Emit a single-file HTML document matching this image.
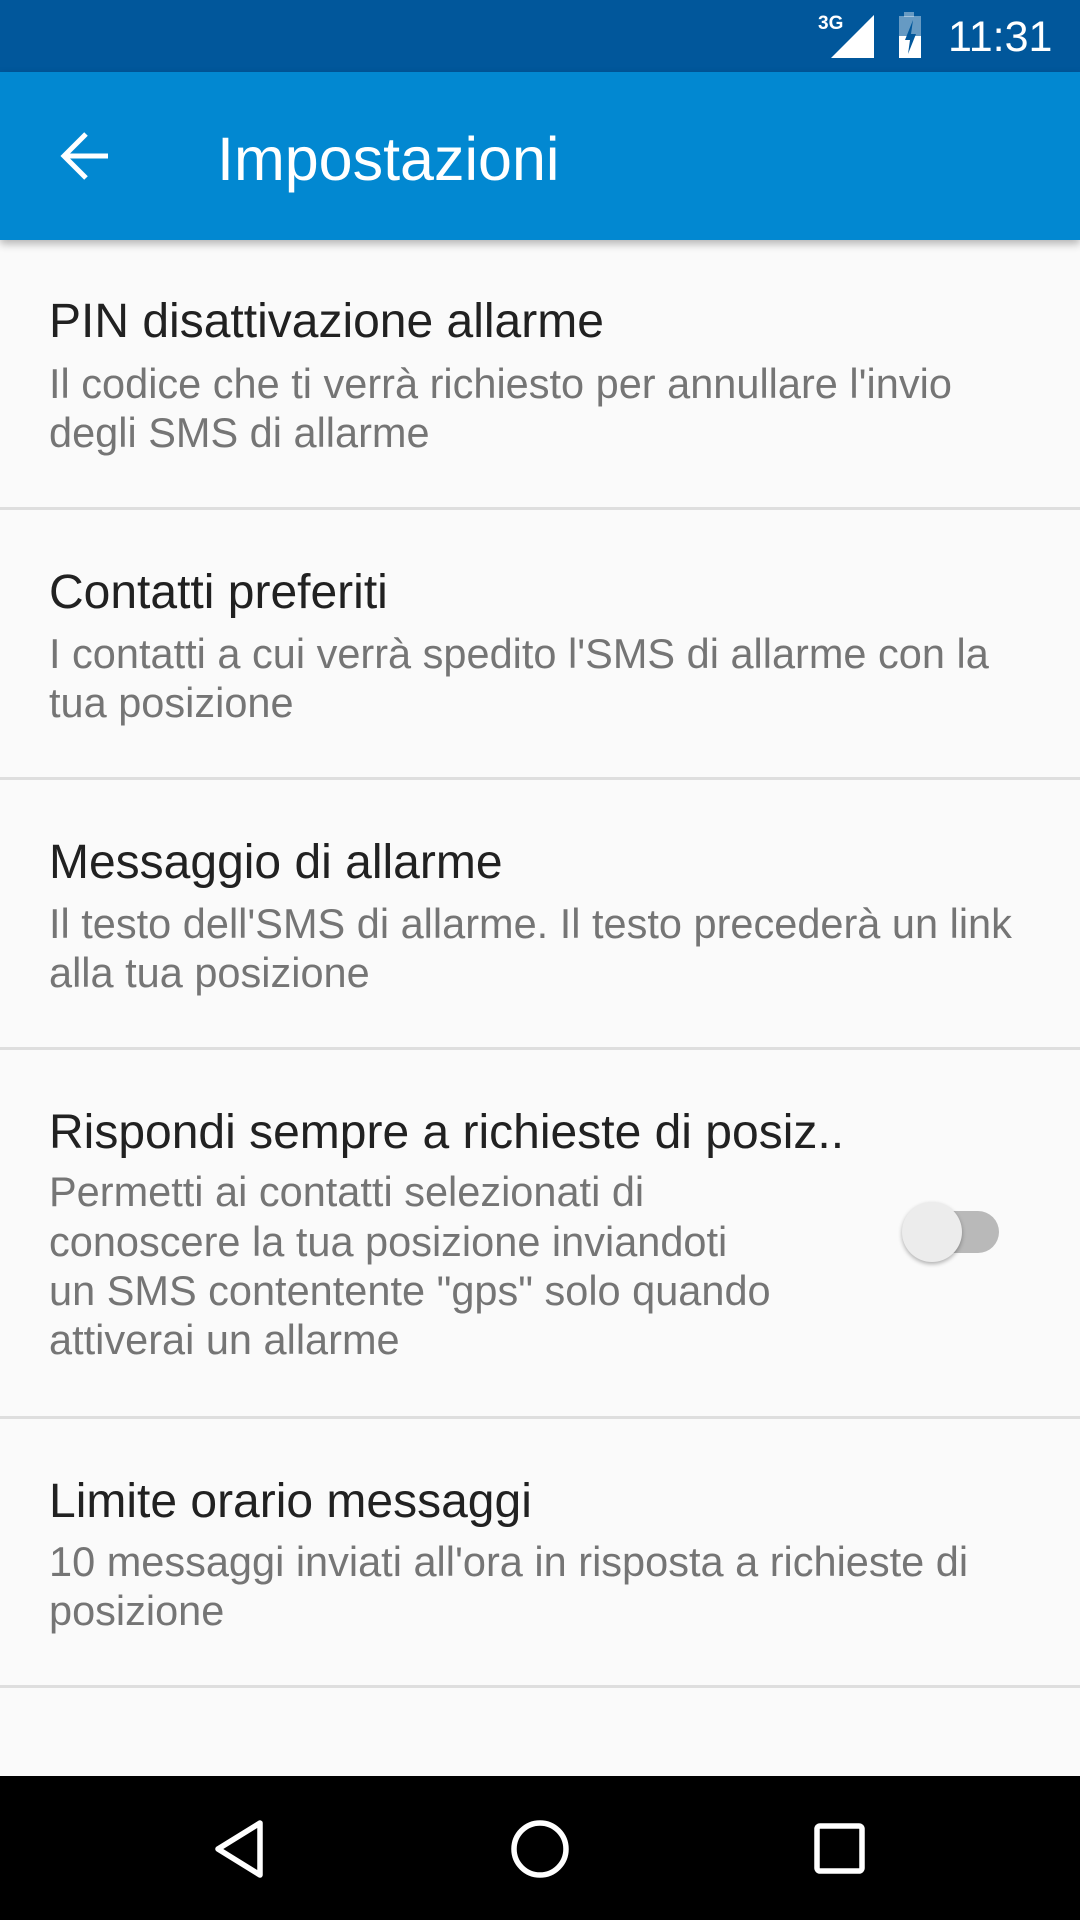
<!DOCTYPE html>
<html><head><meta charset="utf-8"><style>
*{margin:0;padding:0;box-sizing:border-box}
body{width:1080px;height:1920px;background:#fafafa;position:relative;overflow:hidden;font-family:"Liberation Sans",sans-serif}
.sb{position:absolute;left:0;top:0;width:1080px;height:72px;background:#01579b}
.ab{position:absolute;left:0;top:72px;width:1080px;height:168px;background:#0288d1;box-shadow:0 4px 8px rgba(0,0,0,.28)}
.t{position:absolute;left:49px;font-size:48px;color:#212121;line-height:60px;white-space:nowrap}
.s{position:absolute;left:49px;font-size:41.5px;color:#757575;line-height:49px;white-space:nowrap}
.d{position:absolute;left:0;width:1080px;height:3px;background:#dedede}
.nav{position:absolute;left:0;top:1776px;width:1080px;height:144px;background:#000}
</style></head><body>
<div class="sb"></div>
<div style="position:absolute;left:818px;top:13px;color:#fff;font-size:19px;font-weight:bold">3G</div>
<svg style="position:absolute;left:825px;top:12px" width="60" height="50"><polygon points="49,3 49,46 6,46" fill="#fff"/><polygon points="49,3 49,46 39,46 39,13" fill="#fff" opacity=".4"/></svg>
<svg style="position:absolute;left:895px;top:12px" width="36" height="50"><rect x="9" y="0" width="10" height="5" fill="#fff" opacity=".4"/><rect x="4" y="4" width="22" height="42" fill="#fff" opacity=".4"/><rect x="4" y="24" width="22" height="22" fill="#fff"/><polygon points="18,8 10,28 15,28 13,42 21,22 16,22" fill="#01579b"/></svg>
<div style="position:absolute;left:948px;top:12px;color:#fff;font-size:43px;line-height:50px">11:31</div>
<div class="ab"></div>
<svg style="position:absolute;left:58px;top:130px" width="54" height="52"><path d="M50 26H8M28 4L6 26L28 48" stroke="#fff" stroke-width="5" fill="none"/></svg>
<div style="position:absolute;left:217px;top:124px;color:#fff;font-size:61px;line-height:70px">Impostazioni</div>

<div class="t" style="top:292px">PIN disattivazione allarme</div>
<div class="s" style="top:359px">Il codice che ti verrà richiesto per annullare l'invio</div>
<div class="s" style="top:408px">degli SMS di allarme</div>
<div class="d" style="top:507px"></div>

<div class="t" style="top:563px">Contatti preferiti</div>
<div class="s" style="top:629px">I contatti a cui verrà spedito l'SMS di allarme con la</div>
<div class="s" style="top:678px">tua posizione</div>
<div class="d" style="top:777px"></div>

<div class="t" style="top:833px">Messaggio di allarme</div>
<div class="s" style="top:899px">Il testo dell'SMS di allarme. Il testo precederà un link</div>
<div class="s" style="top:948px">alla tua posizione</div>
<div class="d" style="top:1047px"></div>

<div class="t" style="top:1103px">Rispondi sempre a richieste di posiz..</div>
<div class="s" style="top:1167px">Permetti ai contatti selezionati di</div>
<div class="s" style="top:1217px">conoscere la tua posizione inviandoti</div>
<div class="s" style="top:1266px">un SMS contentente "gps" solo quando</div>
<div class="s" style="top:1315px">attiverai un allarme</div>
<div style="position:absolute;left:915px;top:1211px;width:84px;height:42px;border-radius:21px;background:#b9b9b9"></div>
<div style="position:absolute;left:902px;top:1202px;width:60px;height:60px;border-radius:50%;background:#ececec;box-shadow:0 2px 4px rgba(0,0,0,.3)"></div>
<div class="d" style="top:1416px"></div>

<div class="t" style="top:1472px">Limite orario messaggi</div>
<div class="s" style="top:1537px">10 messaggi inviati all'ora in risposta a richieste di</div>
<div class="s" style="top:1586px">posizione</div>
<div class="d" style="top:1685px"></div>

<div class="nav"></div>
<svg style="position:absolute;left:210px;top:1818px" width="60" height="62"><path d="M50 5L50 57L8 31Z" stroke="#fff" stroke-width="5.5" fill="none" stroke-linejoin="round"/></svg>
<svg style="position:absolute;left:508px;top:1818px" width="64" height="64"><circle cx="32" cy="31" r="26" stroke="#fff" stroke-width="5.5" fill="none"/></svg>
<svg style="position:absolute;left:812px;top:1822px" width="56" height="56"><rect x="5" y="4" width="45" height="45" rx="3" stroke="#fff" stroke-width="5.5" fill="none"/></svg>
</body></html>
